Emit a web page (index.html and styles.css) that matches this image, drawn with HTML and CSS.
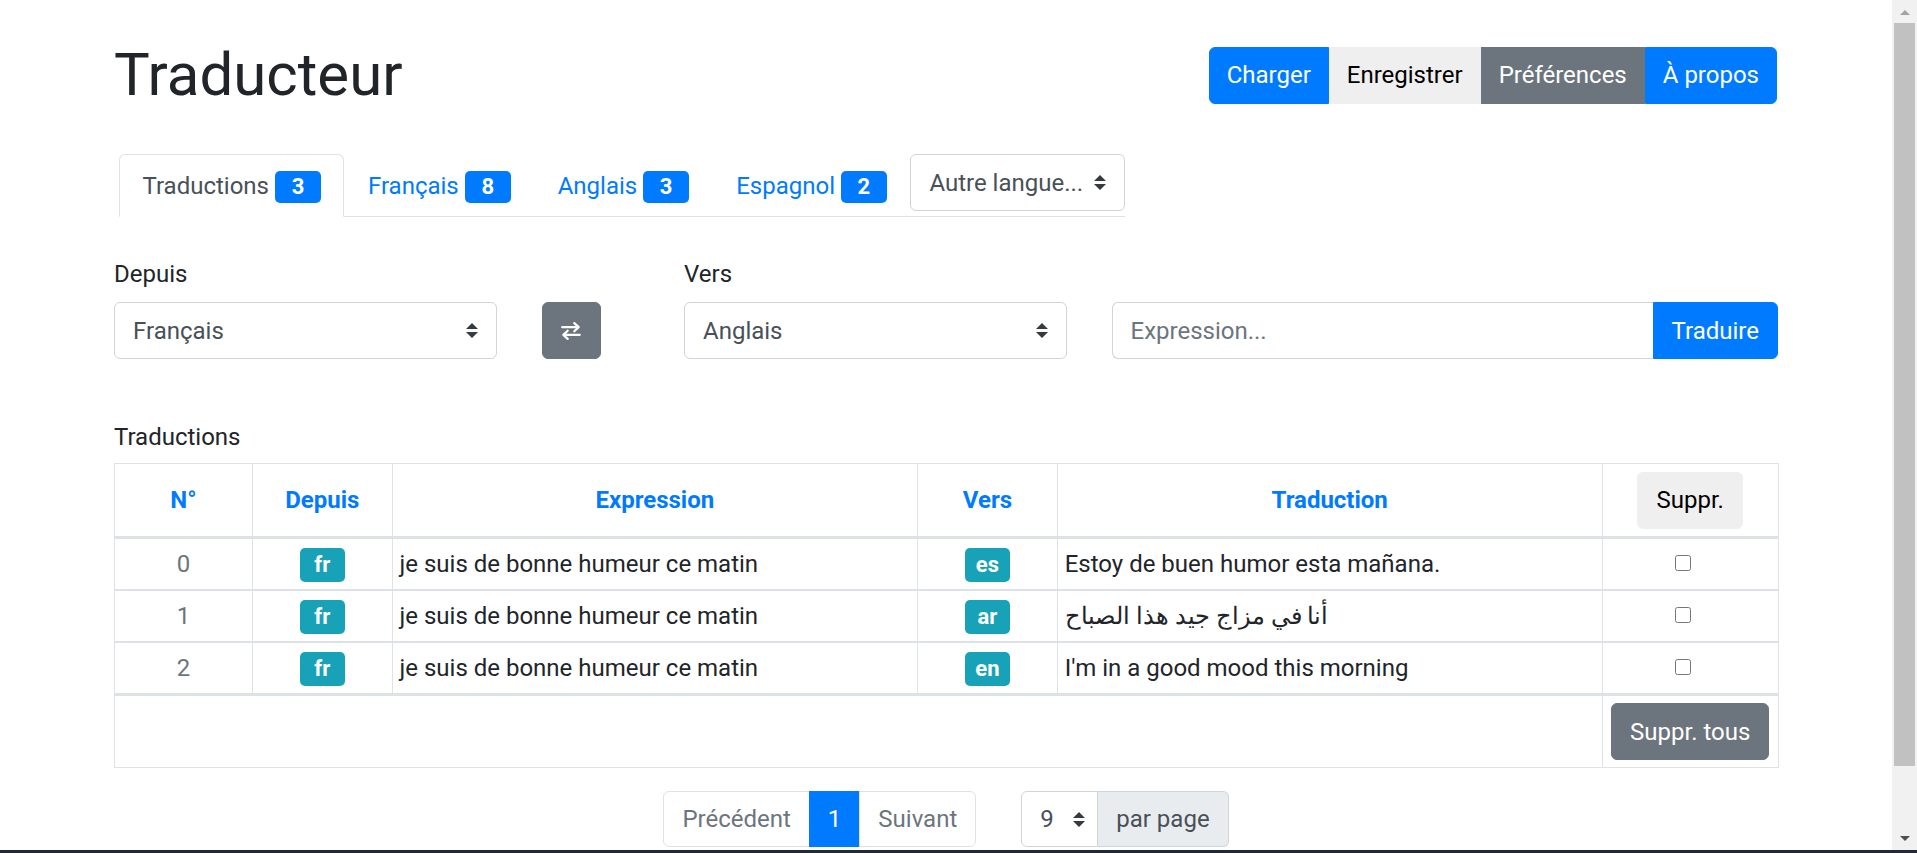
FILE: index.html
```html
<!DOCTYPE html>
<html lang="fr">
<head>
<meta charset="utf-8">
<title>Traducteur</title>
<link rel="stylesheet" href="styles.css">
</head>
<body>
<div class="screen">
  <div class="viewport">
    <div class="container">
      <header class="header">
        <h1 class="title">Traducteur</h1>
        <div class="btn-group">
          <button class="btn btn-primary">Charger</button>
          <button class="btn btn-light">Enregistrer</button>
          <button class="btn btn-secondary">Préférences</button>
          <button class="btn btn-primary">À propos</button>
        </div>
      </header>

      <ul class="tabs">
        <li><a class="tab active">Traductions <span class="badge badge-primary">3</span></a></li>
        <li><a class="tab">Français <span class="badge badge-primary">8</span></a></li>
        <li><a class="tab">Anglais <span class="badge badge-primary">3</span></a></li>
        <li><a class="tab">Espagnol <span class="badge badge-primary">2</span></a></li>
        <li class="tab-select-item">
          <div class="select select-tab"><span>Autre langue...</span>
            <svg class="caret" viewBox="0 0 4 5" width="12" height="15"><path d="M2 0L0 2h4zm0 5L0 3h4z" fill="#343a40"/></svg>
          </div>
        </li>
      </ul>

      <div class="form-grid">
        <div class="field">
          <label class="label">Depuis</label>
          <div class="select"><span>Français</span>
            <svg class="caret" viewBox="0 0 4 5" width="12" height="15"><path d="M2 0L0 2h4zm0 5L0 3h4z" fill="#343a40"/></svg>
          </div>
        </div>
        <div class="field">
          <button class="btn btn-secondary btn-swap" title="Inverser">
            <svg viewBox="0 0 20 18" width="22" height="20" fill="none" stroke="#fff" stroke-width="2" stroke-linecap="round" stroke-linejoin="round">
              <path d="M2 5.5h15M13 1.8l4 3.7-4 3.7"/>
              <path d="M18 12.5H3M7 8.8l-4 3.7 4 3.7"/>
            </svg>
          </button>
        </div>
        <div class="field">
          <label class="label">Vers</label>
          <div class="select"><span>Anglais</span>
            <svg class="caret" viewBox="0 0 4 5" width="12" height="15"><path d="M2 0L0 2h4zm0 5L0 3h4z" fill="#343a40"/></svg>
          </div>
        </div>
        <div class="field">
          <div class="input-group">
            <input class="input" type="text" placeholder="Expression...">
            <button class="btn btn-primary btn-append">Traduire</button>
          </div>
        </div>
      </div>

      <div class="caption">Traductions</div>
      <table class="table">
        <thead>
          <tr>
            <th class="w-num">N°</th>
            <th class="w-lang">Depuis</th>
            <th class="w-expr">Expression</th>
            <th class="w-lang">Vers</th>
            <th class="w-trad">Traduction</th>
            <th class="w-del"><button class="btn btn-light btn-round">Suppr.</button></th>
          </tr>
        </thead>
        <tbody>
          <tr>
            <td class="num">0</td>
            <td class="center"><span class="badge badge-info">fr</span></td>
            <td>je suis de bonne humeur ce matin</td>
            <td class="center"><span class="badge badge-info">es</span></td>
            <td>Estoy de buen humor esta mañana.</td>
            <td class="center"><input class="check" type="checkbox"></td>
          </tr>
          <tr>
            <td class="num">1</td>
            <td class="center"><span class="badge badge-info">fr</span></td>
            <td>je suis de bonne humeur ce matin</td>
            <td class="center"><span class="badge badge-info">ar</span></td>
            <td>أنا في مزاج جيد هذا الصباح</td>
            <td class="center"><input class="check" type="checkbox"></td>
          </tr>
          <tr>
            <td class="num">2</td>
            <td class="center"><span class="badge badge-info">fr</span></td>
            <td>je suis de bonne humeur ce matin</td>
            <td class="center"><span class="badge badge-info">en</span></td>
            <td>I'm in a good mood this morning</td>
            <td class="center"><input class="check" type="checkbox"></td>
          </tr>
        </tbody>
        <tfoot>
          <tr>
            <td colspan="5"></td>
            <td class="center"><button class="btn btn-secondary btn-round">Suppr. tous</button></td>
          </tr>
        </tfoot>
      </table>

      <div class="pager">
        <ul class="pagination">
          <li><a class="page-link first">Précédent</a></li>
          <li><a class="page-link active">1</a></li>
          <li><a class="page-link last">Suivant</a></li>
        </ul>
        <div class="per-page">
          <div class="select select-small"><span>9</span>
            <svg class="caret" viewBox="0 0 4 5" width="12" height="15"><path d="M2 0L0 2h4zm0 5L0 3h4z" fill="#343a40"/></svg>
          </div>
          <span class="addon">par page</span>
        </div>
      </div>
    </div>
  </div>
  <div class="scrollbar">
    <div class="sb-btn">
      <svg viewBox="0 0 10 6" width="10" height="6"><path d="M0 6L5 1l5 5z" fill="#a3a3a3"/></svg>
    </div>
    <div class="sb-thumb"></div>
    <div class="sb-track"></div>
    <div class="sb-btn">
      <svg viewBox="0 0 10 6" width="10" height="6"><path d="M0 0l5 5 5-5z" fill="#505050"/></svg>
    </div>
  </div>
</div>
<div class="edge"></div>
</body>
</html>
```
FILE: styles.css
```css
* { box-sizing: border-box; }

html, body {
  margin: 0;
  height: 853px;
  overflow: hidden;
}

body {
  font-family: Roboto, "Liberation Sans", sans-serif;
  font-size: 24px;
  line-height: 1.5;
  color: #212529;
  background: #fff;
  display: flex;
  flex-direction: column;
}

.screen {
  flex: 1;
  display: flex;
  min-height: 0;
}

.viewport {
  flex: 1;
  overflow: hidden;
}

.container {
  width: 1664px;
  margin: 0 auto;
  padding-top: 39px;
}

/* header */
.header {
  display: flex;
  justify-content: space-between;
  align-items: center;
}

.title {
  margin: 0;
  font-size: 60px;
  font-weight: 400;
  line-height: 72px;
  color: #212529;
}

.btn-group {
  display: flex;
  margin-right: 1px;
}

.btn {
  font: inherit;
  font-weight: 400;
  line-height: 36px;
  padding: 9.5px 18px;
  border: 1px solid transparent;
  border-radius: 0;
  cursor: pointer;
  white-space: nowrap;
}

.btn-group .btn { padding: 9.5px 17px; }
.btn-group .btn:first-child { border-radius: 6px 0 0 6px; }
.btn-group .btn:last-child { border-radius: 0 6px 6px 0; }

.btn-primary { background: #007bff; border-color: #007bff; color: #fff; }
.btn-secondary { background: #6c757d; border-color: #6c757d; color: #fff; }
.btn-light { background: #efefef; border-color: #efefef; color: #000; }
.btn-round { border-radius: 6px; }

/* tabs */
.tabs {
  display: flex;
  align-items: flex-start;
  width: fit-content;
  list-style: none;
  margin: 43px 0 0 5px;
  padding: 0;
  border-bottom: 1px solid #dee2e6;
}

.tab {
  display: block;
  padding: 12.5px 22.5px;
  line-height: 36px;
  border: 1px solid transparent;
  border-radius: 6px 6px 0 0;
  margin-bottom: -1px;
  color: #007bff;
  text-decoration: none;
  white-space: nowrap;
}

.tab.active {
  color: #495057;
  background: #fff;
  border-color: #dee2e6 #dee2e6 #fff;
}

.badge {
  display: inline-block;
  width: 46px;
  font-size: 22px;
  font-weight: 700;
  line-height: 1;
  padding: 5px 0;
  border-radius: 5px;
  color: #fff;
  text-align: center;
  vertical-align: 0;
}

.badge-primary { background: #007bff; }
.badge-info { background: #17a2b8; width: 45px; padding: 6px 0; }

/* selects */
.select {
  display: flex;
  align-items: center;
  justify-content: space-between;
  height: 57px;
  padding: 0 18px;
  border: 1px solid #ced4da;
  border-radius: 6px;
  background: #fff;
  color: #495057;
  white-space: nowrap;
}

.caret { flex: none; display: block; }

.select-tab { width: 215px; }

/* form */
.form-grid {
  display: grid;
  grid-template-columns: 382.5px 97.5px 382.5px 1fr;
  column-gap: 45px;
  align-items: end;
  margin-top: 39px;
}

.label {
  display: block;
  line-height: 36px;
  margin-bottom: 10px;
}

.btn-swap {
  display: flex;
  align-items: center;
  justify-content: center;
  width: 59px;
  height: 57px;
  padding: 0;
  border-radius: 6px;
}

.input-group {
  display: flex;
  height: 57px;
}

.input {
  flex: 1;
  min-width: 0;
  font: inherit;
  color: #495057;
  padding: 0 18px;
  border: 1px solid #ced4da;
  border-right: 0;
  border-radius: 6px 0 0 6px;
  outline: none;
}

.input::placeholder { color: #6c757d; opacity: 1; }

.btn-append {
  border-radius: 0 6px 6px 0;
}

/* table */
.caption {
  margin-top: 60px;
  margin-bottom: 8px;
  line-height: 36px;
}

.table {
  width: 100%;
  border-collapse: collapse;
  table-layout: fixed;
}

.table th,
.table td {
  border: 1px solid #dee2e6;
  padding: 7px;
  vertical-align: middle;
  line-height: 36px;
  white-space: nowrap;
}

.table th {
  color: #007bff;
  font-weight: 700;
  text-align: center;
  padding: 7.5px 7px;
  border-bottom-width: 3px;
}

.table tbody td { border-top-width: 2px; }
.table tfoot td { border-top-width: 3px; padding: 7px; }

.w-num { width: 138px; }
.w-lang { width: 139.5px; }
.w-expr { width: 525.7px; }
.w-trad { width: 545px; }
.w-del { width: 176px; }

.num { text-align: center; color: #6c757d; }
.center { text-align: center; }

.check {
  width: 16px;
  height: 16px;
  margin: 0 14px 0 0;
  vertical-align: middle;
  position: relative;
  top: -3px;
}

/* pager */
.pager {
  display: flex;
  justify-content: center;
  gap: 45px;
  margin-top: 23px;
}

.pagination {
  display: flex;
  list-style: none;
  margin: 0;
  padding: 0;
}

.page-link {
  display: block;
  padding: 12px 18px;
  line-height: 30px;
  border: 1px solid #dee2e6;
  margin-left: -1px;
  color: #6c757d;
  background: #fff;
  text-decoration: none;
}

.page-link.first { margin-left: 0; border-radius: 6px 0 0 6px; }
.page-link.last { border-radius: 0 6px 6px 0; }
.page-link.active { background: #007bff; border-color: #007bff; color: #fff; }

.per-page {
  display: flex;
  height: 56px;
}

.select-small {
  height: 56px;
  width: 77px;
  border-radius: 6px 0 0 6px;
  padding: 0 12px 0 18px;
}

.addon {
  display: flex;
  align-items: center;
  padding: 0 18px;
  background: #e9ecef;
  border: 1px solid #ced4da;
  border-left: 0;
  border-radius: 0 6px 6px 0;
  color: #495057;
}

/* scrollbar */
.scrollbar {
  width: 25px;
  background: #f1f1f1;
  display: flex;
  flex-direction: column;
  align-items: center;
}

.sb-btn {
  height: 23px;
  width: 100%;
  display: flex;
  align-items: center;
  justify-content: center;
  flex: none;
}

.sb-thumb {
  width: 21px;
  height: 743px;
  background: #c1c1c1;
  flex: none;
}

.sb-track { flex: 1; }

.edge {
  height: 3px;
  background: #1e2a38;
  flex: none;
}
```
